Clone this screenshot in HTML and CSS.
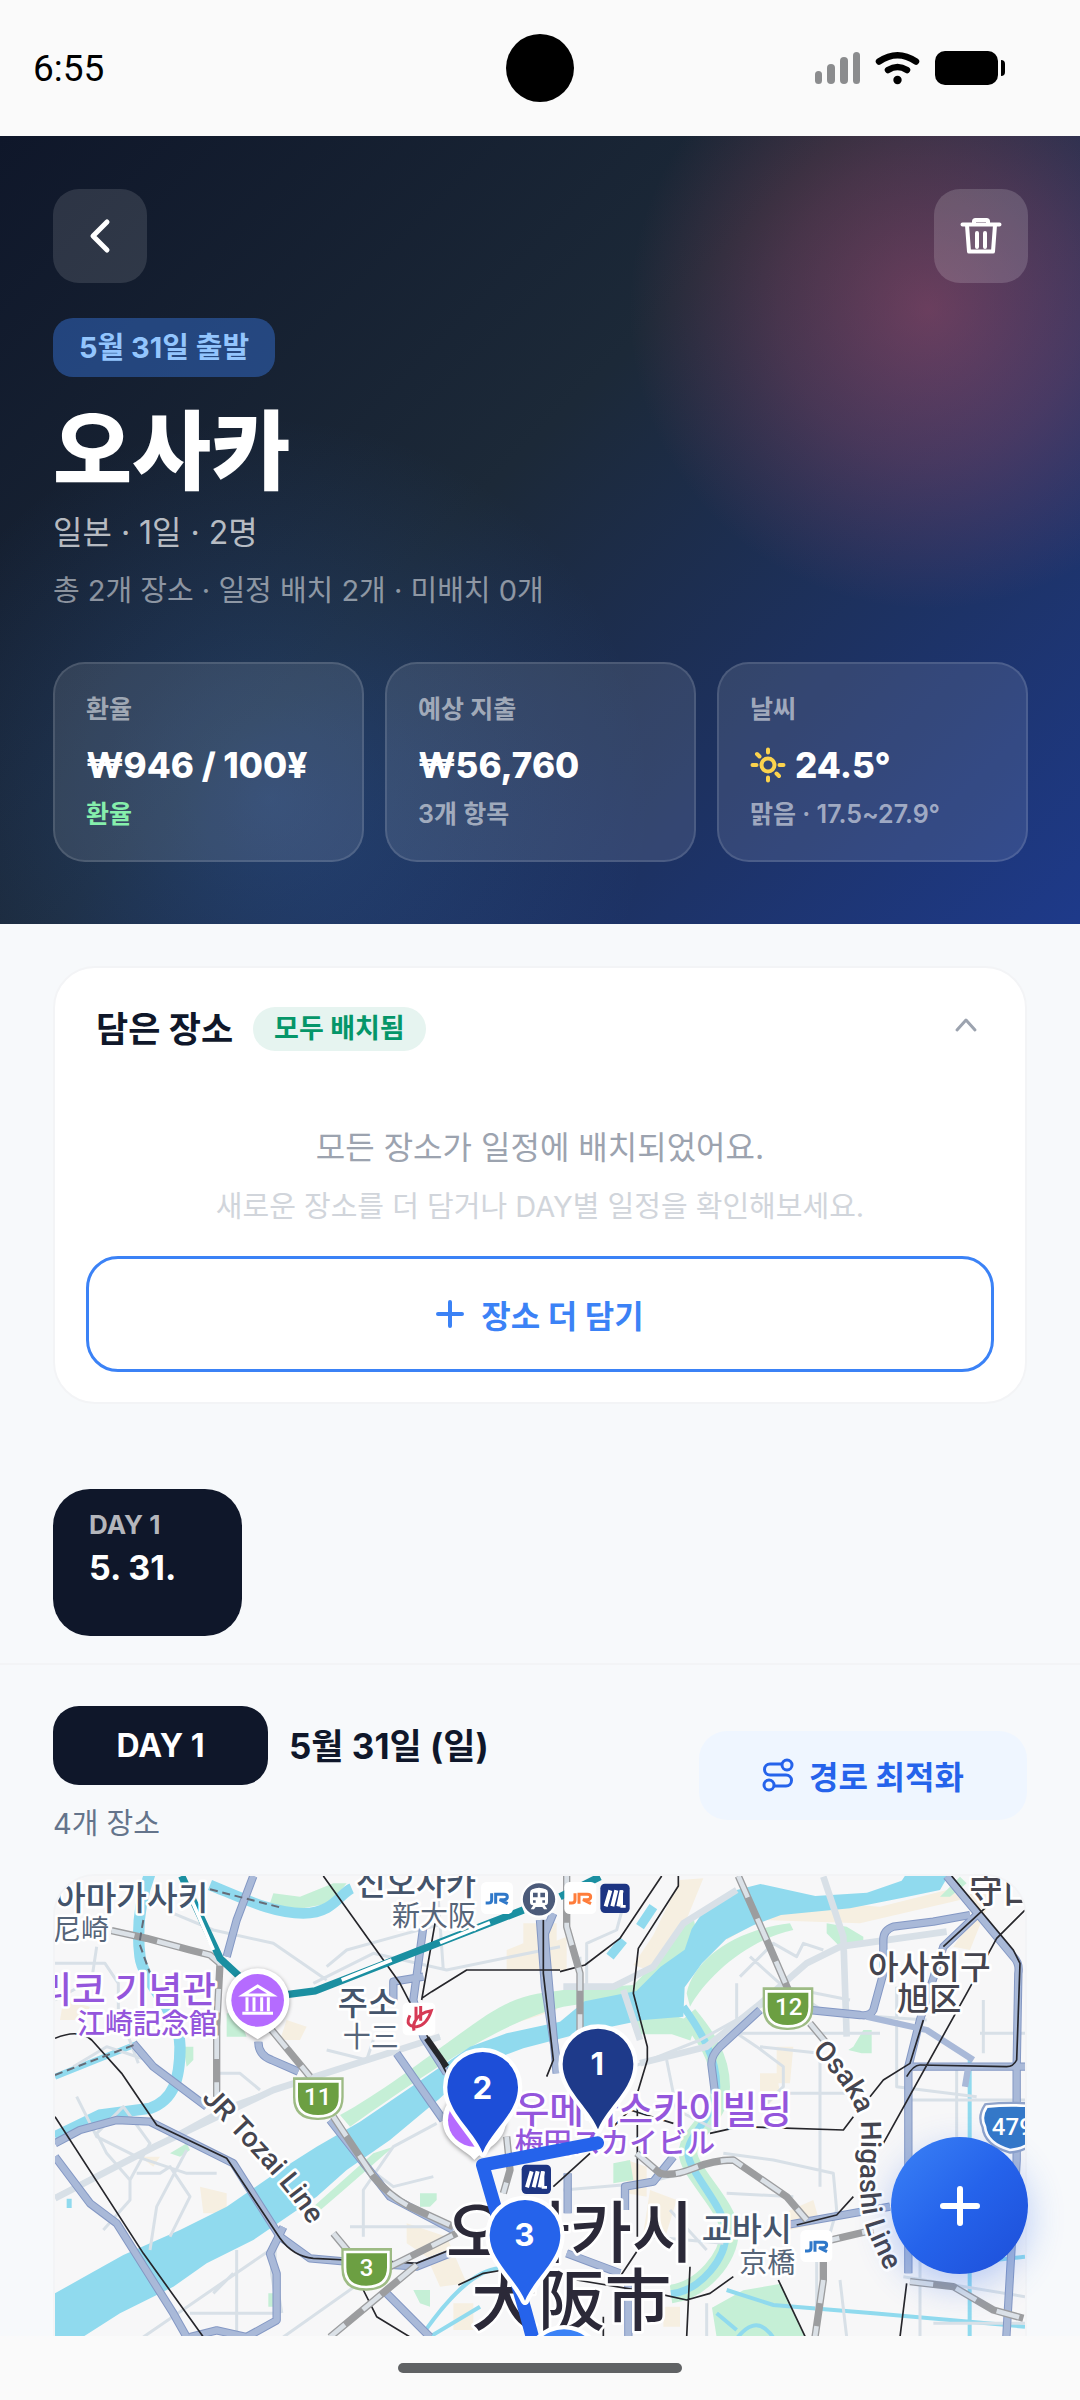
FILE: index.html
```html
<!DOCTYPE html>
<html lang="ko">
<head>
    <meta charset="UTF-8">
    <meta name="viewport" content="width=device-width, initial-scale=1.0">
    <title>오사카 여행</title>
    <link rel="stylesheet" href="styles.css">
</head>
<body>
    <div class="app">
        <!-- 상태 표시줄 -->
        <div class="status-bar">
            <span class="time">6:55</span>
            <span class="camera"></span>
            <svg class="status-icons" width="190" height="34" viewBox="0 0 190 34" aria-hidden="true">
                <g fill="#8b8c8e">
                    <rect x="0" y="20" width="7" height="13" rx="3.5"/>
                    <rect x="12" y="13" width="8" height="20" rx="4"/>
                    <rect x="25" y="6" width="8" height="27" rx="4"/>
                    <rect x="38" y="1" width="7" height="32" rx="3.5"/>
                </g>
                <g fill="none" stroke="#000" stroke-width="6.5" stroke-linecap="round">
                    <path d="M64 10.500Q82.500-2 101 10.500"/>
                    <path d="M73 19Q82.500 13 92 19"/>
                </g>
                <circle cx="82.500" cy="29" r="4.200"/>
                <rect x="120" y="0" width="63" height="34" rx="10"/>
                <path d="M186 9q4 0 4 4v8q0 4-4 4z"/>
            </svg>
        </div>

        <main class="content">
            <header class="hero">
                <div class="hero-top">
                    <button class="icon-btn" aria-label="뒤로">
                        <svg width="42" height="42" viewBox="0 0 42 42"><path d="M28 7 14 21l14 14"/></svg>
                    </button>
                    <button class="icon-btn light" aria-label="삭제">
                        <svg class="trash" width="42" height="42" viewBox="0 0 42 42"><path d="M2.500 9.500h37M14 9V6.500q0-1.500 1.500-1.500h11q1.500 0 1.500 1.500V9M7 10l2 26.500h24L35 10M17 18v14M25 18v14"/></svg>
                    </button>
                </div>
                <span class="depart">5월 31일 출발</span>
                <h1 class="city">오사카</h1>
                <p class="summary">일본 · 1일 · 2명</p>
                <p class="counts">총 2개 장소 · 일정 배치 2개 · 미배치 0개</p>
                <div class="stats">
                    <div class="stat">
                        <p class="stat-label">환율</p>
                        <p class="stat-value">₩946 / 100¥</p>
                        <p class="stat-note green">환율</p>
                    </div>
                    <div class="stat">
                        <p class="stat-label">예상 지출</p>
                        <p class="stat-value">₩56,760</p>
                        <p class="stat-note">3개 항목</p>
                    </div>
                    <div class="stat">
                        <p class="stat-label">날씨</p>
                        <p class="stat-value">
                            <svg class="sun" width="36" height="36" viewBox="0 0 36 36" aria-hidden="true"><circle cx="18" cy="18" r="6.500"/><path d="M18 2.500v3M18 30.500v3M2.500 18h4M29.500 18h4M7 7l2.500 2.500M26.500 26.500 29 29"/></svg>
                            24.5°
                        </p>
                        <p class="stat-note">맑음 · 17.5~27.9°</p>
                    </div>
                </div>
            </header>

            <!-- 담은 장소 -->
            <section class="saved">
                <div class="saved-head">
                    <h2>담은 장소</h2>
                    <span class="pill">모두 배치됨</span>
                    <button class="fold" aria-label="접기">
                        <svg width="24" height="24" viewBox="0 0 24 24"><path d="M3 13 12 3l9 10"/></svg>
                    </button>
                </div>
                <p class="empty">모든 장소가 일정에 배치되었어요.</p>
                <p class="empty-sub">새로운 장소를 더 담거나 DAY별 일정을 확인해보세요.</p>
                <button class="add-btn">
                    <svg width="28" height="28" viewBox="0 0 28 28" aria-hidden="true"><path d="M14 2v24M2 14h24"/></svg>
                    장소 더 담기
                </button>
            </section>

            <!-- 날짜 탭 -->
            <nav class="days">
                <button class="day-chip">
                    <span class="day-no">DAY 1</span>
                    <span class="day-date">5. 31.</span>
                </button>
            </nav>

            <section class="day">
                <div class="day-head">
                    <div>
                        <div class="day-title">
                            <span class="day-badge">DAY 1</span>
                            <h2>5월 31일 (일)</h2>
                        </div>
                        <p class="day-count">4개 장소</p>
                    </div>
                    <button class="route-btn">
                        <svg width="32" height="34" viewBox="0 0 32 34" aria-hidden="true"><circle cx="25" cy="7" r="5"/><circle cx="7" cy="27" r="5"/><path d="M20 6H8a5.500 5.500 0 0 0 0 11h16a5.500 5.500 0 0 1 0 11H12"/></svg>
                        경로 최적화
                    </button>
                </div>

                <div class="map">
                    <svg viewBox="45 48 2910 1500" role="img" aria-label="오사카 지도">
                        <defs>
                            <path id="tozai" d="M484 716C590 830 660 900 730 985S800 1090 850 1160"/>
                            <path id="higashi" d="M2316 574C2400 660 2452 730 2463 800C2468 900 2446 1000 2480 1110L2580 1330"/>
                            <g id="jr"><rect width="96" height="96" rx="16" fill="#fff"/><path d="M32 34v20q0 9-10 9h-8M44 65V37h25q10 0 10 8t-10 8H56l24 12" fill="none" stroke="currentColor" stroke-width="9"/></g>
                            <g id="metro"><rect width="88" height="88" rx="14" fill="#1d3583"/><path d="M16 68 30 20M36 68 48 20M54 68 64 20" fill="none" stroke="#fff" stroke-width="12"/><path d="M64 20v48h12" fill="none" stroke="#fff" stroke-width="8"/></g>
                            <g id="shield"><path d="M-76-62h152v60q0 66-76 68T-76-2z" fill="#9dbb84"/><path d="M-65-50H65V-4Q65 54 0 55T-65-4z" fill="#6c9f42" stroke="#fff" stroke-width="8"/></g>
                            <path id="pin" d="M0 196C-30 126-106 76-106 0A106 106 0 0 1 106 0C106 76 30 126 0 196Z"/>
                        </defs>

                        <rect x="45" y="48" width="2910" height="1500" fill="#f7f7f8"/>

                        <!-- 시가지 -->
                        <g class="sand">
                            <path d="M1450 190h100v140h-150v-60l50-20zM740 480l60 20-20 40h-60zM300 890h60l-20 30zM480 980l80 20v60h-70zM1100 1090l120 40 60 140-80 10-40-90-60-40zM1240 1330h60v80h-60zM1920 60l70-5-90 220-60 60-60-20 60-90zM2210 560h50l-10 110h-40zM2160 640h50l10 60-60 60zM2770 110l100-40-80 200-50-10 60-90zM1760 900l60 20v90l-60-10zM1830 990l80 30-40 130-60-30zM2230 1060l90-40 20 70-90 20zM1300 530l250-80 10-40-180 40zM70 420l80 20-20 40H60zM1530 250l50-20v100h-50zM2080 180l180-60 260 20 240-60v40l-300 70-300-10-100 60zM1870 1340h50v60h-50z"/>
                        </g>

                        <!-- 녹지 -->
                        <g class="green">
                            <path d="M900 765C1040 690 1200 560 1340 465C1440 400 1500 400 1570 390L1780 375C1860 300 1900 200 1960 170L1970 220C1900 330 1830 420 1760 410L1570 440C1400 480 1200 610 930 800Z"/>
                            <path d="M820 1040 1000 880 1060 860 900 1000 830 1060zM1940 400C1960 300 2080 210 2250 190L2260 210C2120 240 2000 350 1950 440zM700 100l80 10 100-40 40 0-50 60-110 20-70-20zM2360 190l60 10 50 30v20l-70 10-40-40zM2700 110l60-60 20 20-50 40zM560 460h30l30 70h-60zM430 560h30v40l-20 20zM390 880l50-30 10 20-30 20zM1140 1000h50v20l-20 20h-30zM1120 1290h50v50l-30-10zM685 1300h20v40h-20zM2440 560l30-50h25v70h-30l-40-10zM1720 910l50-10 10 60-60 10z"/>
                            <path d="M2016 1343 2110 1291 2223 1271 2254 1343 2296 1431V1560H2050z"/>
                            <path d="M1790 495h110l60 20" class="bank"/>
                            <path d="M1944 465C1990 520 2042 590 2042 680S1944 820 1944 878S2068 1040 2068 1116S1986 1290 1893 1302" class="bank"/>
                        </g>

                        <!-- 강 -->
                        <path class="water" d="M45 1300 160 1235 250 1185 420 1110 560 1040 720 930 830 860 960 785 1100 690 1290 560 1400 520 1560 485 1634 424 1789 393 1862 320 1934 269 1955 207 1996 145 2078 93 2161 72 2326 108 2481 98 2585 62 2600 40H2729L2700 90 2585 114 2430 145 2223 165 2140 196 2058 238 1986 310 1934 382 1930 470 1810 480 1634 517 1450 565 1300 620 1200 715 1050 840 920 930 830 1010 640 1140 500 1210 400 1280 240 1360 130 1430 45 1530Z"/>
                        <g class="stream">
                            <path d="M330 40C300 120 290 210 300 290S420 460 420 560S400 720 330 745L180 765 45 830" stroke-width="34"/>
                            <path d="M510 75C620 120 700 160 790 160S900 100 935 85" stroke-width="32"/>
                            <path d="M45 650 290 552" stroke-width="18"/>
                            <path d="M1930 440C1980 510 2030 590 2030 680S1944 820 1944 878S2056 1040 2058 1116S1986 1290 1893 1302" stroke-width="22"/>
                            <path d="M1710 290 1750 240M1800 200 1840 140M80 1030h15" stroke-width="28"/>
                            <path d="M2060 1290 2200 1335 2500 1360 2955 1400M2789 600V1550M2030 1360l60 50M2080 1450q60-90 110-30t-10 90M1150 1420C1220 1320 1300 1230 1380 1225M1170 1430 1320 1340M2680 1220l275-30" stroke-width="12"/>
                        </g>

                        <!-- 작은 도로 -->
                        <g class="minor">
                            <path d="M45 310h150l40 60v80l60 160M45 420l110-60 15-100M100 620 200 560 320 600M110 710l60 120 120 60 150 50h90M170 820 250 740 330 850 270 960 200 880zM45 1010 200 930 340 860 560 740 700 690 960 610 1200 530M270 960v60l-80 90M290 940h70l30-20 60 90-60 120M440 870 350 1040 330 1170M400 160 520 210 700 250 860 360M860 320 920 270 1100 220 1215 190M820 370 1000 280 1220 330 1560 260M860 570 980 600 1000 540M540 640h60l60 50M970 1130V990L1060 860 1190 790M930 1100h300M980 920l80 60 120-30M590 1170v260M450 1360h270M310 1431 690 1170M520 1300l60-60M730 1431 1000 1240M1210 330 1190 50M1640 380V250l90-40 30-110M1620 290v120"/>
                            <path d="M2100 350l100-100 70 40 20-40 60 20M2130 290l100 90 200 40M2090 370v150l60 40 80 60v60l-60 60M2100 520h420M2160 560l180 20v400M2225 700h200M1780 620l200-80 200-110M1880 600l30 150 120 60M2270 400l90 60 300 20M2570 380v300l240 30M2820 520h135M2830 420v160M2600 720h355M2750 620v300M1570 990l240-20 120-30M2060 1000l200 10M2050 880 2200 900 2380 940 2390 1050 2350 1190M2330 1200v200M2400 1260l20 171M2000 1330v100M2590 1250l365 60M2640 1100V1431M2680 1390h275M1830 1130l220 20M1890 1050l110 120"/>
                        </g>
                        <g class="minor wide">
                            <path d="M1570 380h150l120-60 90-130 160-100M1750 390l50 150M1800 610 2000 560 2150 440 2300 310 2400 260 2720 215M2350 50l60 180 10 300M700 1150v90l20 120M45 1015 340 862 700 690 1200 530"/>
                        </g>

                        <!-- 간선 도로 -->
                        <g class="road-edge">
                            <path d="M45 850 120 810 230 780 330 785 440 840 580 910 720 1130 810 1195 920 1205 1130 1220 1230 1180"/>
                            <path d="M45 890 150 1030 230 1090 400 1360 440 1431"/>
                            <path d="M640 48 590 180 560 290M280 550 340 620 500 740M655 545q0 40 40 55l80 35M870 780 1050 1010 1240 1110M1150 200 1120 420 1150 530 1220 640M1150 350l-90 15v60M1070 580 1210 780M1500 180 1515 380 1550 600M1540 160l-25 60v160M450 1431l80-20 90 20 90-50v-140l-20-60 40-80M1030 1290 1170 1431"/>
                            <path d="M2790 165 2680 185 2560 200Q2530 210 2530 240V340L2500 450Q2490 470 2460 465L2310 450M2160 450 2040 560Q2010 590 2015 620L2025 700M2720 48 2920 290Q2940 310 2935 340L2930 620V900L2895 1500M2820 155 2710 260 2640 480 2605 620V850L2605 1240M2610 620H2960M1510 180 1550 640M1900 890 1840 965 1755 980V1050M1580 1180 1740 1240M1765 1250V1500M2240 1095 2550 1040M1583 940V1060"/>
                        </g>
                        <g class="road">
                            <path d="M45 850 120 810 230 780 330 785 440 840 580 910 720 1130 810 1195 920 1205 1130 1220 1230 1180"/>
                            <path d="M45 890 150 1030 230 1090 400 1360 440 1431"/>
                            <path d="M640 48 590 180 560 290M280 550 340 620 500 740M655 545q0 40 40 55l80 35M870 780 1050 1010 1240 1110M1150 200 1120 420 1150 530 1220 640M1150 350l-90 15v60M1070 580 1210 780M1500 180 1515 380 1550 600M1540 160l-25 60v160M450 1431l80-20 90 20 90-50v-140l-20-60 40-80M1030 1290 1170 1431"/>
                            <path d="M2790 165 2680 185 2560 200Q2530 210 2530 240V340L2500 450Q2490 470 2460 465L2310 450M2160 450 2040 560Q2010 590 2015 620L2025 700M2720 48 2920 290Q2940 310 2935 340L2930 620V900L2895 1500M2820 155 2710 260 2640 480 2605 620V850L2605 1240M2610 620H2960M1510 180 1550 640M1900 890 1840 965 1755 980V1050M1580 1180 1740 1240M1765 1250V1500M2240 1095 2550 1040M1583 940V1060M2480 470 2660 510 2800 600M2785 620l-10 60"/>
                        </g>

                        <!-- 철도 -->
                        <g class="rail">
                            <path d="M45 535q70-30 110 5l90 100 105 155 210 100 160 240q40 55 100 60l100 5M1050 1205l80 5 100-40M45 770 310 1180 490 1431M850 48 1080 370 1220 640M1185 190 1145 420M1145 415l30-20 105-65H1560M1560 335 1635 315 1740 235 1865 48M1915 48v30L1795 265 1780 400 1822 560V600L1792 700V1130M970 1290l40 80 100 61M1510 180v160L1540 600 1520 650M1255 1275 1330 1240 1390 1230"/>
                            <path d="M2735 48 2920 270 2940 310 2930 600Q2920 620 2900 620L2640 615Q2620 615 2600 650M2955 150 2870 235 2780 400 2530 850M2840 140 2710 260M2650 480 2610 610 2530 660 2490 710M2010 820 2100 800 2410 810 2440 770M1720 800 1770 750 1900 790M1540 980 1650 880M2270 1095 2390 1065 2440 1010M1950 1220 1940 1431M1610 1260 1850 1300 1940 1320 2010 1300 2080 1250M2215 1260 2296 1431M1690 1431V1370M2600 1270 2580 1431M1800 1160 1740 1250"/>
                            <path d="M1160 535l60 85" stroke-width="18"/>
                        </g>
                        <g class="line">
                            <path d="M215 212 320 235 450 270 510 285 540 310 530 500V710M695 510 810 650M880 770 1000 950Q1050 1010 1110 1040L1240 1100M1050 1220 1250 1120M1130 1215 870 1431M880 1120l50 60M1400 830l10 100-20 70M1580 48 1580 200 1620 340 1620 540M2095 48 2180 240 2245 390M2310 490l50 60M1790 880 1860 940Q1900 950 1960 925T2080 900L2240 1010 2300 1080M2350 1120V1260L2325 1431M2330 1150 2500 1110M2610 1265 2740 1280 2860 1350 2950 1375"/>
                        </g>
                        <g class="line-dash">
                            <path d="M215 212 320 235 450 270 510 285 540 310 530 500V710M695 510 810 650M880 770 1000 950Q1050 1010 1110 1040L1240 1100M1050 1220 1250 1120M1130 1215 870 1431M880 1120l50 60M1400 830l10 100-20 70M1580 48 1580 200 1620 340 1620 540M2095 48 2180 240 2245 390M2310 490l50 60M1790 880 1860 940Q1900 950 1960 925T2080 900L2240 1010 2300 1080M2350 1120V1260L2325 1431M2330 1150 2500 1110M2610 1265 2740 1280 2860 1350 2950 1375"/>
                        </g>
                        <path d="M425 48 540 295 610 360M745 403 825 393 1450 150M1560 110l120-60" fill="none" stroke="#1a8fa1" stroke-width="22"/>
                        <path d="M455 120 520 270M905 360 1055 300M1200 248 1350 188" fill="none" stroke="#fff" stroke-width="11"/>
                        <path d="M510 88 720 142M310 180 298 250 330 340M45 645 290 552" fill="none" stroke="#666b76" stroke-width="6" stroke-dasharray="24 14"/>

                        <!-- 지명 -->
                        <g class="label town">
                            <text x="505" y="150" font-size="100" text-anchor="end">아마가사키</text>
                            <text x="1308" y="106" font-size="98" text-anchor="end">신오사카</text>
                            <text x="893" y="466" font-size="98">주소</text>
                            <text x="1985" y="1142" font-size="98">교바시</text>
                        </g>
                        <g class="label town-sub">
                            <text x="207" y="240" font-size="84" text-anchor="end">尼崎</text>
                            <text x="1308" y="198" font-size="84" text-anchor="end">新大阪</text>
                            <text x="908" y="560" font-size="84">十三</text>
                            <text x="2098" y="1240" font-size="84">京橋</text>
                        </g>
                        <g class="label place">
                            <text x="528" y="430" font-size="110" text-anchor="end">에자키 글리코 기념관</text>
                            <text x="531" y="522" font-size="84" text-anchor="end">江崎記念館</text>
                            <text x="1424" y="788" font-size="113">우메다스카이빌딩</text>
                            <text x="1424" y="878" font-size="86">梅田スカイビル</text>
                        </g>
                        <g class="label ward">
                            <text x="2484" y="358" font-size="100">아사히구</text>
                            <text x="2572" y="450" font-size="96">旭区</text>
                            <text x="2788" y="130" font-size="100">守口</text>
                            <text font-size="84"><textPath href="#tozai">JR Tozai Line</textPath></text>
                            <text font-size="84"><textPath href="#higashi">Osaka Higashi Line</textPath></text>
                        </g>
                        <g class="label city-name">
                            <text x="1218" y="1190" font-size="202">오사카시</text>
                            <text x="1294" y="1396" font-size="200">大阪市</text>
                        </g>

                        <!-- 역과 도로 번호 -->
                        <use href="#jr" x="1323" y="66" color="#2f78c9"/>
                        <use href="#jr" x="1573" y="66" color="#ff7d3b"/>
                        <use href="#jr" x="2281" y="1110" color="#2f78c9"/>
                        <use href="#metro" x="1681" y="71"/>
                        <use href="#metro" x="1445" y="914"/>
                        <circle cx="1497" cy="118" r="52" fill="#4c5b7a" stroke="#fff" stroke-width="7"/>
                        <path d="M1477 88q20-10 40 0 7 3 7 10v28q0 10-10 10l8 12h-10l-5-7h-20l-5 7h-10l8-12q-10 0-10-10V98q0-7 7-10z" fill="#fff"/>
                        <path d="M1479 98h14v14h-14zM1501 98h14v14h-14zM1479 121h8v7h-8zM1507 121h8v7h-8z" fill="#4c5b7a"/>
                        <rect x="1088" y="428" width="98" height="98" rx="14" fill="#fff"/>
                        <path d="M1128 440v40M1142 438v44M1110 466q-18 34 20 34 30-4 44-48-38 6-50 34-6 12-2 26" fill="none" stroke="#d63a55" stroke-width="9"/>
                        <use href="#shield" x="835" y="714"/>
                        <use href="#shield" x="980" y="1226"/>
                        <use href="#shield" x="2244" y="444"/>
                        <path d="M2840 740q75-8 150 0v80q-20 45-80 50-70-20-75-70-15-30 5-60z" fill="#3478c8" stroke="#8fa3ca" stroke-width="22"/>
                        <path d="M2840 740q75-8 150 0v80q-20 45-80 50-70-20-75-70-15-30 5-60z" fill="#3478c8" stroke="#fff" stroke-width="8"/>
                        <g class="road-no">
                            <text x="833" y="736">11</text>
                            <text x="980" y="1248">3</text>
                            <text x="2246" y="466">12</text>
                            <text x="2917" y="824">479</text>
                        </g>

                        <!-- 명소 -->
                        <g class="spot">
                            <path d="M653 538C620 515 558 490 558 420A95 95 0 0 1 748 420C748 490 686 515 653 538Z" fill="#fff"/>
                            <path d="M1303 900C1280 870 1208 850 1208 780A95 95 0 0 1 1398 780C1398 850 1330 870 1303 900Z" fill="#fff"/>
                        </g>
                        <circle cx="653" cy="421" r="79" fill="#b56bff"/>
                        <circle cx="1303" cy="781" r="79" fill="#b56bff"/>
                        <path d="M610 405 653 378 697 405zM607 460h92M621 412v42M642 412v42M665 412v42M685 412v42" fill="none" stroke="#fff" stroke-width="9"/>

                        <!-- 경로와 핀 -->
                        <path d="M1672 849 1328 915 1455 1350 1485 1460 1572 1700" fill="none" stroke="#2563eb" stroke-width="40" stroke-linecap="round" stroke-linejoin="round"/>
                        <g class="pins">
                            <use href="#pin" x="1572" y="1514" fill="#3b82f6"/>
                            <use href="#pin" x="1455" y="1126" fill="#2563eb"/>
                            <use href="#pin" x="1328" y="682" fill="#1d4ed8"/>
                            <use href="#pin" x="1674" y="612" fill="#1e3a8a"/>
                            <text x="1453" y="1158">3</text>
                            <text x="1327" y="716">2</text>
                            <text x="1672" y="645">1</text>
                        </g>
                    </svg>
                </div>
            </section>
        </main>

        <button class="fab" aria-label="장소 추가">
            <svg width="48" height="48" viewBox="0 0 48 48"><path d="M24 7v34M7 24h34"/></svg>
        </button>

        <div class="home-bar"><span></span></div>
    </div>
</body>
</html>
```
FILE: styles.css
```css
/* 전체 페이지 설정 */
* {
    box-sizing: border-box;
}

body {
    margin: 0;
    font-family: Inter, "Noto Sans CJK KR", sans-serif;
    background-color: #f7f9fb;
    color: #0f172a;
}

h1, h2, p {
    margin: 0;
}

button {
    border: none;
    padding: 0;
    font-family: inherit;
    cursor: pointer;
}

svg {
    display: block;
    flex: none;
}

.app {
    position: relative;
    display: flex;
    flex-direction: column;
    height: 100vh;
}

/* 상태 표시줄 */
.status-bar {
    display: grid;
    grid-template-columns: 1fr auto 1fr;
    align-items: center;
    flex: none;
    height: 136px;
    padding: 0 75px 0 33px;
    background-color: #fafafa;
}

.time {
    font-family: Roboto, sans-serif;
    font-size: 37px;
    color: #000;
}

.camera {
    width: 68px;
    height: 68px;
    margin-left: 42px;
    border-radius: 50%;
    background-color: #000;
}

.status-icons {
    justify-self: end;
}

.content {
    flex: 1;
    min-height: 0;
    overflow-y: auto;
    scrollbar-width: none;
}

/* 상단 영역 */
.hero {
    padding: 53px 52px 62px 53px;
    background:
        radial-gradient(circle 300px at 86% 22%, rgba(244, 93, 124, 0.36), rgba(244, 93, 124, 0.2) 50%, rgba(244, 93, 124, 0) 100%),
        radial-gradient(circle 380px at 25% 84%, rgba(59, 130, 246, 0.24), rgba(59, 130, 246, 0) 100%),
        linear-gradient(135deg, #0f172a 0%, #1c2938 45%, #1e3a8a 100%);
    color: #fff;
}

.hero-top {
    display: flex;
    justify-content: space-between;
    margin-bottom: 35px;
}

.icon-btn {
    display: flex;
    align-items: center;
    justify-content: center;
    width: 94px;
    height: 94px;
    border-radius: 26px;
    background-color: rgba(255, 255, 255, 0.12);
}

.icon-btn.light {
    background-color: rgba(255, 255, 255, 0.16);
}

.icon-btn path {
    fill: none;
    stroke: #fff;
    stroke-width: 5;
    stroke-linecap: round;
    stroke-linejoin: round;
}

.icon-btn .trash path {
    stroke-width: 4;
}

.depart {
    display: block;
    width: fit-content;
    padding: 0 26px;
    border-radius: 20px;
    background-color: rgba(59, 130, 246, 0.4);
    color: #93c5fd;
    font-size: 29px;
    font-weight: 700;
    line-height: 59px;
}

.city {
    margin-top: 25px;
    font-size: 86px;
    font-weight: 800;
    line-height: 100px;
}

.summary {
    margin-top: 9px;
    font-size: 32px;
    line-height: 44px;
    color: rgba(255, 255, 255, 0.7);
}

.counts {
    margin-top: 16px;
    font-size: 29px;
    line-height: 40px;
    color: rgba(255, 255, 255, 0.5);
}

.stats {
    display: grid;
    grid-template-columns: repeat(3, 1fr);
    gap: 21px;
    margin-top: 51px;
}

.stat {
    padding: 27px 16px 28px 31px;
    border: 2px solid rgba(255, 255, 255, 0.12);
    border-radius: 32px;
    background-color: rgba(255, 255, 255, 0.1);
    white-space: nowrap;
}

.stat-label,
.stat-note {
    font-size: 25px;
    font-weight: 600;
    line-height: 36px;
    color: rgba(255, 255, 255, 0.55);
}

.stat-value {
    display: flex;
    align-items: center;
    gap: 9px;
    margin: 14px 0 7px;
    font-size: 35px;
    font-weight: 800;
    line-height: 48px;
}

.stat-note.green {
    color: #86efac;
}

.sun {
    fill: none;
    stroke: #fcd34d;
    stroke-width: 4;
    stroke-linecap: round;
}

/* 담은 장소 카드 */
.saved {
    margin: 42px 53px 0;
    padding: 39px 31px 30px;
    border: 2px solid #f3f4f6;
    border-radius: 42px;
    background-color: #fff;
    text-align: center;
}

.saved-head {
    display: flex;
    align-items: center;
    padding: 0 16px 0 10px;
}

.saved-head h2,
.day-title h2 {
    font-size: 35px;
    font-weight: 700;
    line-height: 44px;
}

.pill {
    margin-left: 20px;
    padding: 0 21px;
    border-radius: 22px;
    background-color: #e6f4f0;
    color: #059669;
    font-size: 27px;
    font-weight: 700;
    line-height: 44px;
}

.fold {
    margin-left: auto;
    background: none;
}

.fold path {
    fill: none;
    stroke: #9ca3af;
    stroke-width: 3;
    stroke-linecap: round;
    stroke-linejoin: round;
}

.empty {
    margin-top: 74px;
    font-size: 32px;
    line-height: 46px;
    color: #9ca3af;
}

.empty-sub {
    margin-top: 15px;
    font-size: 29px;
    line-height: 42px;
    color: #d1d5db;
}

.add-btn {
    display: flex;
    align-items: center;
    justify-content: center;
    gap: 17px;
    width: 100%;
    height: 116px;
    margin-top: 28px;
    border: 3px solid #3b82f6;
    border-radius: 32px;
    background-color: #fff;
    color: #3b82f6;
    font-size: 32px;
    font-weight: 700;
}

.add-btn path {
    fill: none;
    stroke: #3b82f6;
    stroke-width: 4;
    stroke-linecap: round;
}

/* 날짜 탭 */
.days {
    padding: 85px 53px 27px;
    border-bottom: 2px solid #f3f4f6;
}

.day-chip {
    display: flex;
    flex-direction: column;
    align-items: flex-start;
    width: 189px;
    height: 147px;
    padding: 20px 36px;
    border-radius: 37px;
    background-color: #0f172a;
    color: #fff;
}

.day-no {
    font-size: 26px;
    font-weight: 700;
    line-height: 32px;
    color: rgba(255, 255, 255, 0.7);
}

.day-date {
    margin-top: 3px;
    font-size: 34px;
    font-weight: 700;
    line-height: 48px;
}

/* 일정 */
.day {
    padding: 41px 53px 0;
}

.day-head,
.day-title {
    display: flex;
    align-items: center;
}

.day-head {
    justify-content: space-between;
    margin-bottom: 30px;
}

.day-title {
    gap: 21px;
}

.day-badge {
    width: 215px;
    border-radius: 26px;
    background-color: #0f172a;
    color: #fff;
    font-size: 32px;
    font-weight: 700;
    line-height: 79px;
    text-align: center;
}

.day-count {
    margin-top: 19px;
    font-size: 29px;
    line-height: 40px;
    color: #64748b;
}

.route-btn {
    display: flex;
    align-items: center;
    justify-content: center;
    gap: 15px;
    width: 328px;
    height: 89px;
    border-radius: 28px;
    background-color: #eff6ff;
    color: #2563eb;
    font-size: 32px;
    font-weight: 700;
}

.route-btn svg {
    fill: none;
    stroke: #2563eb;
    stroke-width: 3;
}

/* 지도 */
.map {
    overflow: hidden;
    border: 2px solid #f3f4f6;
    border-radius: 42px;
}

.map svg {
    width: 100%;
}

.sand {
    fill: #f6efe1;
}

.green {
    fill: #c5efd6;
}

.bank {
    fill: none;
    stroke: #c5efd6;
    stroke-width: 56;
}

.water {
    fill: #90daee;
}

.stream {
    fill: none;
    stroke: #90daee;
}

.minor,
.road,
.road-edge,
.rail,
.line,
.line-dash {
    fill: none;
    stroke-linejoin: round;
}

.minor {
    stroke: #d8e0e7;
    stroke-width: 9;
}

.minor.wide {
    stroke-width: 20;
}

.road-edge {
    stroke: #8498c4;
    stroke-width: 25;
}

.road {
    stroke: #a9b9d8;
    stroke-width: 19;
}

.rail {
    stroke: #26262b;
    stroke-width: 5;
}

.line {
    stroke: #9c9d9f;
    stroke-width: 22;
}

.line-dash {
    stroke: #dbe1e7;
    stroke-width: 14;
    stroke-dasharray: 70 70;
}

.label {
    paint-order: stroke;
    stroke: #fff;
    stroke-width: 16;
    stroke-linejoin: round;
    font-family: Roboto, "Noto Sans CJK KR", sans-serif;
    font-weight: 500;
}

.town {
    fill: #44546b;
}

.town-sub {
    fill: #566579;
    font-weight: 400;
}

.place {
    fill: #9456dc;
}

.ward {
    fill: #45454f;
}

.city-name {
    fill: #2b2938;
}

.road-no {
    fill: #fff;
    font-family: Roboto, sans-serif;
    font-size: 72px;
    font-weight: 500;
    text-anchor: middle;
}

.spot {
    filter: drop-shadow(0 4px 6px rgba(0, 0, 0, 0.4));
}

.pins use {
    stroke: #fff;
    stroke-width: 26;
    stroke-linejoin: round;
    paint-order: stroke;
}

.pins text {
    fill: #fff;
    font-size: 94px;
    font-weight: 700;
    text-anchor: middle;
}

/* 추가 버튼 */
.fab {
    position: absolute;
    right: 52px;
    bottom: 126px;
    display: flex;
    align-items: center;
    justify-content: center;
    width: 137px;
    height: 137px;
    border-radius: 50%;
    background: linear-gradient(135deg, #3b82f6, #2563eb 50%, #1d4ed8);
    box-shadow: 0 12px 36px rgba(37, 99, 235, 0.3);
}

.fab path {
    fill: none;
    stroke: #fff;
    stroke-width: 6;
    stroke-linecap: round;
}

/* 하단 홈 바 */
.home-bar {
    display: flex;
    align-items: center;
    justify-content: center;
    flex: none;
    height: 64px;
    background-color: #fafafa;
}

.home-bar span {
    width: 284px;
    height: 10px;
    border-radius: 5px;
    background-color: #606264;
}
```
